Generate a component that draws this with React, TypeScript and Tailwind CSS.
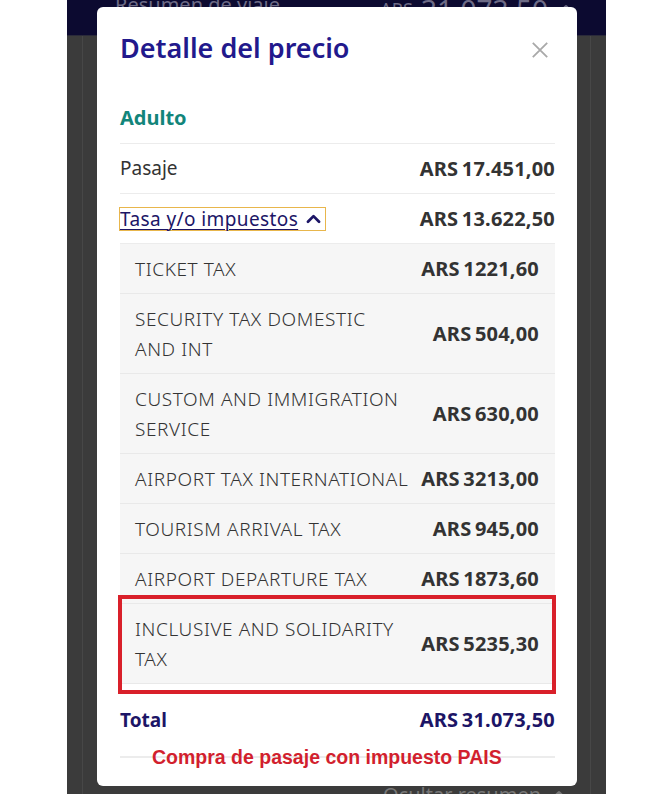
import React from 'react';

type Tax = { name: string; amount: string; tall?: boolean };

const taxes: Tax[] = [
  { name: 'TICKET TAX', amount: '1221,60' },
  { name: 'SECURITY TAX DOMESTIC\nAND INT', amount: '504,00', tall: true },
  { name: 'CUSTOM AND IMMIGRATION\nSERVICE', amount: '630,00', tall: true },
  { name: 'AIRPORT TAX INTERNATIONAL', amount: '3213,00' },
  { name: 'TOURISM ARRIVAL TAX', amount: '945,00' },
  { name: 'AIRPORT DEPARTURE TAX', amount: '1873,60' },
  { name: 'INCLUSIVE AND SOLIDARITY\nTAX', amount: '5235,30', tall: true },
];

const font = { fontFamily: '"Noto Sans", "Open Sans", sans-serif' };

const Price: React.FC<{ value: string; className?: string }> = ({ value, className = '' }) => (
  <span className={`font-bold whitespace-nowrap text-[20px] tracking-[0.2px] ${className}`}>ARS{'\u2009'}{value}</span>
);

const ChevronUp: React.FC<{ className?: string }> = ({ className = '' }) => (
  <svg viewBox="0 0 24 24" className={className} fill="none" stroke="currentColor" strokeWidth="3.5" strokeLinecap="round" strokeLinejoin="round">
    <path d="M5 16l7-7 7 7" />
  </svg>
);

const TaxRow: React.FC<{ tax: Tax }> = ({ tax }) => (
  <div
    className={`flex items-center justify-between border-b border-[#e9e9e9] bg-[#f6f6f6] pl-[15px] pr-[16px] ${
      tax.tall ? 'h-[80px]' : 'h-[50px]'
    }`}
  >
    <span className="whitespace-pre-line text-[19px] leading-[30px] font-light text-[#333] tracking-[0.6px]">{tax.name}</span>
    <Price value={tax.amount} className="text-[#333]" />
  </div>
);

export default function App() {
  return (
    <div className="w-[672px] h-[794px] bg-white overflow-hidden" style={font}>
      <div className="relative ml-[67px] w-[539px] h-[794px] bg-[#3b3b3b] overflow-hidden">
        {/* page behind the overlay */}
        <div className="h-[36px] bg-[#0c0a30] border-b border-[#2a2a3a] flex items-start justify-between pl-[48px] pr-[30px]">
          <span className="-mt-[10px] text-[20px] text-[#6d6b86]">Resumen de viaje</span>
          <span className="-mt-[12px] flex items-center gap-2 text-[#6d6b86]">
            <span className="text-[18px]">ARS</span>
            <span className="text-[28px]">31.073,50</span>
            <ChevronUp className="w-5 h-5" />
          </span>
        </div>
        <div className="mx-[15px] h-[758px] border-x border-[#474747]" />

        <div className="absolute left-[30px] top-[7px] w-[480px] h-[779px] rounded-[6px] bg-white pl-[23px] pr-[22px]">
          {/* header */}
          <div className="flex items-start justify-between pt-[24px]">
            <h1 className="text-[27px] leading-[34px] font-semibold text-[#22198c]">Detalle del precio</h1>
            <svg viewBox="0 0 20 20" className="mt-[10px] mr-[6px] w-[18px] h-[18px]" stroke="#a9a9a9" strokeWidth="2">
              <path d="M2 2l16 16M18 2L2 18" />
            </svg>
          </div>

          <h2 className="mt-[39px] text-[20px] leading-[28px] font-bold text-[#12857a]">Adulto</h2>

          <div className="mt-[11px] border-t border-[#ececec]">
            <div className="flex items-center justify-between h-[50px] border-b border-[#ececec]">
              <span className="text-[19px] text-[#333]">Pasaje</span>
              <Price value="17.451,00" className="text-[#333]" />
            </div>
            <div className="flex items-center justify-between h-[50px] border-b border-[#ececec]">
              <span className="-ml-[1px] flex items-center gap-[6px] border-[1.5px] border-[#e8b64c] pr-[2px] text-[19px] leading-[22px] tracking-[0.4px] text-[#1c1566]">
                <span className="underline underline-offset-[3px] decoration-[1px]">Tasa y/o impuestos</span>
                <ChevronUp className="w-[19px] h-[19px] text-[#1c1566]" />
              </span>
              <Price value="13.622,50" className="text-[#333]" />
            </div>
            {taxes.map((t) => (
              <TaxRow key={t.name} tax={t} />
            ))}
          </div>

          <div className="flex items-center justify-between h-[72px]">
            <span className="text-[19px] font-bold text-[#1c1566]">Total</span>
            <Price value="31.073,50" className="text-[#1c1566]" />
          </div>
          <div className="relative border-t-2 border-[#ececec]">
            <span
              className="absolute left-[32px] -top-[14px] text-[19.5px] leading-[26px] font-bold text-[#d21f2e]"
              style={{ fontFamily: '"Liberation Sans", Arial, sans-serif' }}
            >
              Compra de pasaje con impuesto PAIS
            </span>
          </div>

          {/* annotation box */}
          <div className="absolute left-[21px] top-[588px] w-[438px] h-[99px] border-[4px] border-[#d9202a]" />
        </div>

        <div className="absolute left-[316px] top-[780px] flex items-center gap-2 text-[20px] text-[#777]">
          <span>Ocultar resumen</span>
          <ChevronUp className="w-5 h-5" />
        </div>
      </div>
    </div>
  );
}
